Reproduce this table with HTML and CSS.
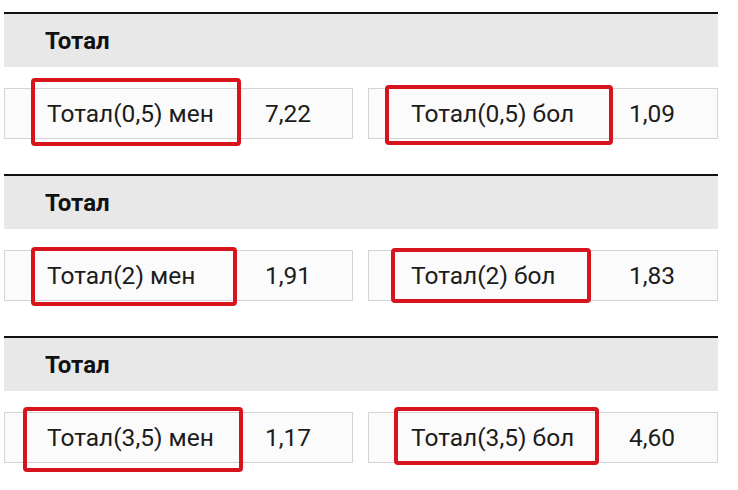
FILE: index.html
```html
<!DOCTYPE html>
<html lang="ru">
<head>
	<meta charset="UTF-8">
	<title>Тотал</title>
	<link rel="stylesheet" href="styles.css">
</head>
<body>

	<div class="market">
		<div class="market-title">Тотал</div>
		<div class="outcomes">
			<div class="outcome">
				<span class="label">Тотал(0,5) мен</span>
				<span class="odds">7,22</span>
				<i class="mark mark-1"></i>
			</div>
			<div class="outcome">
				<span class="label">Тотал(0,5) бол</span>
				<span class="odds">1,09</span>
				<i class="mark mark-2"></i>
			</div>
		</div>
	</div>

	<div class="market">
		<div class="market-title">Тотал</div>
		<div class="outcomes">
			<div class="outcome">
				<span class="label">Тотал(2) мен</span>
				<span class="odds">1,91</span>
				<i class="mark mark-3"></i>
			</div>
			<div class="outcome">
				<span class="label">Тотал(2) бол</span>
				<span class="odds">1,83</span>
				<i class="mark mark-4"></i>
			</div>
		</div>
	</div>

	<div class="market">
		<div class="market-title">Тотал</div>
		<div class="outcomes">
			<div class="outcome">
				<span class="label">Тотал(3,5) мен</span>
				<span class="odds">1,17</span>
				<i class="mark mark-5"></i>
			</div>
			<div class="outcome">
				<span class="label">Тотал(3,5) бол</span>
				<span class="odds">4,60</span>
				<i class="mark mark-6"></i>
			</div>
		</div>
	</div>

</body>
</html>
```

FILE: styles.css
```css
html, body {
	margin: 0;
	padding: 0;
	background: #fff;
	font-family: Roboto, "Liberation Sans", sans-serif;
	color: #1c1c1c;
}

body {
	padding: 12px 20px 0 4px;
	width: 714px;
}

.market {
	border-top: 2px solid #111;
	margin-bottom: 35px;
}

.market-title {
	height: 53px;
	display: flex;
	align-items: center;
	padding-left: 41px;
	background: #e8e8e8;
	font-size: 24px;
	font-weight: bold;
	color: #111;
}

.outcomes {
	display: grid;
	grid-template-columns: 349px 350px;
	gap: 15px;
	margin-top: 21px;
}

.outcome {
	position: relative;
	height: 49px;
	display: flex;
	align-items: center;
	border: 1px solid #d4d4d4;
	background: #fbfbfb;
	font-size: 24.5px;
}

.label {
	width: 218px;
	padding-left: 42px;
	box-sizing: border-box;
	white-space: nowrap;
}

.odds {
	padding-left: 42px;
}

/* рамки-пометки поверх ячеек */
.mark {
	position: absolute;
	border: 4px solid #d7131d;
	border-radius: 4px;
	box-sizing: border-box;
}

.mark-1 { left: 26px; top: -11px; width: 210px; height: 68px; }
.mark-2 { left: 16px; top: -4px; width: 228px; height: 60px; }
.mark-3 { left: 26px; top: -4px; width: 206px; height: 59px; }
.mark-4 { left: 22px; top: -3px; width: 200px; height: 55px; }
.mark-5 { left: 18px; top: -6px; width: 220px; height: 65px; }
.mark-6 { left: 25px; top: -6px; width: 205px; height: 58px; }
```
